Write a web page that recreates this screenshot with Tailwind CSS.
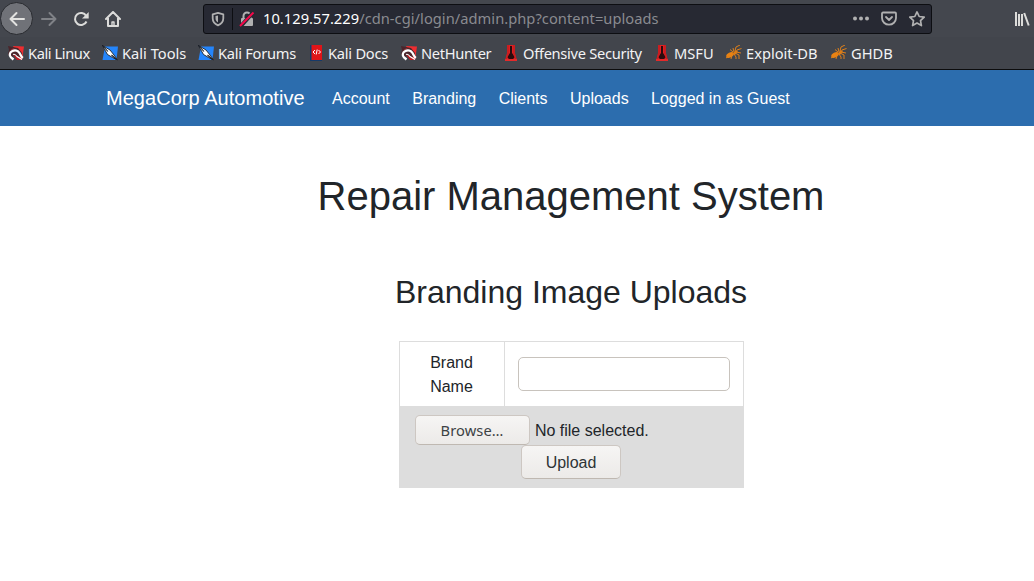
<!DOCTYPE html>
<html lang="en">
<head>
    <meta charset="UTF-8">
    <meta name="viewport" content="width=device-width, initial-scale=1.0">
    <title>Repair Management System</title>
    <script src="https://cdn.jsdelivr.net/npm/@tailwindcss/browser@4"></script>
</head>
<body class="bg-white text-[#212529] font-['Liberation_Sans',sans-serif] overflow-hidden h-[581px]">
    <!-- Shared bookmark icons -->
    <svg class="hidden">
        <symbol id="hunter" viewBox="0 0 16 16">
            <path d="M5 1l11 .5-2 13.500-5-5z" fill="#ee2d30"/>
            <path d="M0 1l5 1 5 1 4 5v3l-3 1-5-2-3 3L0 9l1-4z" fill="#4b252b"/>
            <path d="M0 8l4-4 3-1-5 3z" fill="#c93a40"/>
            <path d="M5.500 14.500L3 12.500C1 10.500 1.500 7.500 4 6.200c3-1.700 6-.7 7.500 1.800 1 1.600 1.500 3.500 3.300 5" fill="none" stroke="#fff" stroke-width="2.300"/>
            <path d="M5 9.500l3 1 6 4.500H9z" fill="#bd1920"/>
            <path d="M5 9.500c2-1 3 .5 4 2l5 3" fill="none" stroke="#fff" stroke-width="1.200"/>
        </symbol>
        <symbol id="tools" viewBox="0 0 16 16">
            <path d="M3 1.500h13L14.500 15H.5z" fill="#2485fb"/>
            <path d="M0 0l3 2 5 3 4 5 3.500 5-5-2.500-5-3L3.500 6z" fill="#fff" stroke="#1b2028" stroke-width=".9"/>
            <path d="M0 0l6 6.500M9.500 10l5 4.500" stroke="#1b2028" stroke-width="1.100"/>
        </symbol>
        <symbol id="docs" viewBox="0 0 16 16">
            <path d="M2 0h12v16H2z" fill="#e01418"/>
            <path d="M2 0h1.500v15H14v1H2z" fill="#163a69"/>
            <path d="M7 5L5 7l2 2M10.500 5l2 2-2 2M9.200 4.500L8.200 9.500" fill="none" stroke="#fff"/>
        </symbol>
        <symbol id="offsec" viewBox="0 0 16 16">
            <path d="M4 0h8v9l2 7H2l2-7z" fill="#df2021"/>
            <path d="M7 1h2v7l3 4-3 3H7l-3-3 3-4z" fill="#2a0c0e"/>
            <path d="M4 0v8l-2 8h1l3-7V0zM10 0h2v8l2 8h-1l-3-7z" fill="#c91d20"/>
            <path d="M2 14h12v2H2z" fill="#e32a2a"/>
        </symbol>
        <symbol id="ant" viewBox="0 0 16 16">
            <ellipse cx="4" cy="10" rx="4" ry="2.400" transform="rotate(-25 4 10)" fill="#e98212"/>
            <path d="M6 9l4-4 2 1-3 4z" fill="#e07c12"/>
            <path d="M7 7L4 4.500M8 7L7 3M9 6l1-4 4-2M11 5l4.500-1.500M10 7l5 1M9 8l4 2v4M8 9l2 3v2M6 10l-1 4M3 11l-3 2" fill="none" stroke="#df801a" stroke-width="1"/>
        </symbol>
    </svg>

    <!-- Browser toolbar -->
    <header class="h-[70px] bg-[#42454c] border-b border-[#0c0c0d] font-['Noto_Sans',sans-serif] text-[#f3f3f4]">
        <div class="h-[37px] flex items-center bg-[#44474e]">
            <div class="size-[33px] shrink-0 rounded-full bg-[#707278] border border-[#292b30] flex items-center justify-center">
                <svg class="size-4" viewBox="0 0 16 16" fill="none" stroke="#e2e2e0" stroke-width="2" stroke-linecap="round" stroke-linejoin="round"><path d="M15 8H1.500M7.500 2l-6 6 6 6"/></svg>
            </div>
            <svg class="size-4 ml-2 shrink-0" viewBox="0 0 16 16" fill="none" stroke="#808287" stroke-width="2" stroke-linecap="round" stroke-linejoin="round"><path d="M1 8h13.500M8.500 2l6 6-6 6"/></svg>
            <svg class="size-4 ml-4 shrink-0" viewBox="0 0 16 16" fill="none" stroke="#dcdcda" stroke-width="2"><path d="M13.200 5A6 6 0 1 0 13.500 10.500"/><path d="M15.700 1v6.500H9z" fill="#dcdcda" stroke="none"/></svg>
            <svg class="size-4 ml-4 shrink-0" viewBox="0 0 16 16" fill="none" stroke="#dcdcda" stroke-width="2" stroke-linecap="round" stroke-linejoin="round"><path d="M1 8l7-7 7 7M3 7v8h10V7"/><path d="M7 15v-4h2v4" stroke-width="1.400"/></svg>
            <div class="ml-[82px] w-[729px] h-[30px] shrink-0 flex items-center bg-[#272933] border border-[#0d0e12] rounded-[3px]">
                <svg class="size-4 ml-[6px] shrink-0" viewBox="0 0 16 16" fill="none" stroke="#b0b0b1" stroke-width="1.800" stroke-linejoin="round"><path d="M8 1.800l5.300 1.500v4c0 3.500-2 5.700-5.300 7-3.300-1.300-5.300-3.500-5.300-7v-4z"/><path d="M8 4.500v7C6 10.300 5.500 9 5.500 7V5z" fill="#b0b0b1" stroke="none"/></svg>
                <div class="ml-[6px] w-px h-[22px] bg-[#0d0e12] shrink-0"></div>
                <svg class="size-4 ml-[6px] shrink-0" viewBox="0 0 16 16"><path d="M3 7h10a1 1 0 0 1 1 1v6a1 1 0 0 1-1 1H3a1 1 0 0 1-1-1V8a1 1 0 0 1 1-1z" fill="#b0b0b1"/><path d="M4.500 8V5a3.500 3.500 0 0 1 7 0v3" fill="none" stroke="#b0b0b1" stroke-width="2"/><path d="M1.500 15.500L14 1.500" stroke="#272933" stroke-width="4"/><path d="M1 15L14.500 1.500" stroke="#f5084a" stroke-width="1.900"/></svg>
                <div class="ml-2 w-[584px] shrink-0 text-[14.67px] leading-5 tracking-[0.04px] whitespace-nowrap text-[#8a8b90] -mt-0.5"><span class="text-white">10.129.57.229</span>/cdn-cgi/login/admin.php?content=uploads</div>
                <svg class="size-4 shrink-0 ml-[6px]" viewBox="0 0 16 16" fill="#b0b0b1"><circle cx="2" cy="7.500" r="2"/><circle cx="8" cy="7.500" r="2"/><circle cx="14" cy="7.500" r="2"/></svg>
                <svg class="size-4 shrink-0 ml-3" viewBox="0 0 16 16" fill="none" stroke="#b0b0b1" stroke-width="1.800" stroke-linecap="round" stroke-linejoin="round"><path d="M2 1.500h12a1 1 0 0 1 1 1v4.500a7 6.700 0 0 1-14 0V2.500a1 1 0 0 1 1-1z"/><path d="M5 6l3 3 3-3"/></svg>
                <svg class="size-4 shrink-0 ml-3" viewBox="0 0 16 16" fill="none" stroke="#b0b0b1" stroke-width="1.700" stroke-linejoin="round"><path d="M8 .9l2.200 4.600 5 .6-3.700 3.500.9 5L8 12.100l-4.400 2.500.9-5L.8 6.100l5-.6z"/></svg>
            </div>
            <svg class="w-4 h-4 ml-[82px] shrink-0" viewBox="0 0 16 16" stroke="#dcdcda" stroke-width="2"><path d="M2 1v14M5 3v12M8 3v12M10.200 2l4.500 12.500"/></svg>
        </div>
        <nav class="h-8 flex items-center text-[14.67px] leading-5 whitespace-nowrap">
            <a class="flex items-center gap-1 ml-2 w-[94px] shrink-0 tracking-[-0.42px]"><svg class="size-4 shrink-0"><use href="#hunter"/></svg><span>Kali Linux</span></a>
            <a class="flex items-center gap-1 w-[96px] shrink-0"><svg class="size-4 shrink-0"><use href="#tools"/></svg><span>Kali Tools</span></a>
            <a class="flex items-center gap-1 w-[110px] shrink-0 tracking-[-0.28px]"><svg class="size-4 shrink-0"><use href="#tools"/></svg><span>Kali Forums</span></a>
            <a class="flex items-center gap-1 w-[93px] shrink-0 tracking-[-0.25px]"><svg class="size-4 shrink-0"><use href="#docs"/></svg><span>Kali Docs</span></a>
            <a class="flex items-center gap-1 w-[102px] shrink-0 tracking-[-0.33px]"><svg class="size-4 shrink-0"><use href="#hunter"/></svg><span>NetHunter</span></a>
            <a class="flex items-center gap-1 w-[151px] shrink-0 tracking-[-0.3px]"><svg class="size-4 shrink-0"><use href="#offsec"/></svg><span>Offensive Security</span></a>
            <a class="flex items-center gap-1 w-[72px] shrink-0"><svg class="size-4 shrink-0"><use href="#offsec"/></svg><span>MSFU</span></a>
            <a class="flex items-center gap-1 w-[105px] shrink-0"><svg class="size-4 shrink-0"><use href="#ant"/></svg><span>Exploit-DB</span></a>
            <a class="flex items-center gap-1 shrink-0"><svg class="size-4 shrink-0"><use href="#ant"/></svg><span>GHDB</span></a>
        </nav>
    </header>

    <!-- Site navigation -->
    <nav class="h-14 bg-[#2c6dae] text-white flex items-center pl-[106px] whitespace-nowrap">
        <a class="text-xl w-[226px] tracking-[0.04px]">MegaCorp Automotive</a>
        <div class="flex gap-[22.4px] pt-0.5">
            <a>Account</a>
            <a>Branding</a>
            <a>Clients</a>
            <a>Uploads</a>
            <a>Logged in as Guest</a>
        </div>
    </nav>

    <main class="w-[930px] ml-[106px] flex flex-col items-center">
        <h1 class="mt-[46px] text-[40px] leading-12 whitespace-nowrap">Repair Management System</h1>
        <h2 class="mt-[53px] text-[32px] leading-[38px] whitespace-nowrap">Branding Image Uploads</h2>

        <form class="mt-[30px] w-[345px] h-[147px] border border-[#dddddd] text-center">
            <div class="flex h-16">
                <div class="w-[105px] pt-0.5 border-r border-[#dddddd] flex items-center justify-center leading-6">Brand<br>Name</div>
                <div class="flex-1 flex items-center justify-center">
                    <input type="text" class="w-[212px] h-[34px] border border-[#c8c3bd] rounded-[5px] bg-white">
                </div>
            </div>
            <div class="h-[81px] bg-[#dddddd] pt-[9px] flex flex-col items-center">
                <div class="w-full pl-[15px] flex items-center gap-[5.4px]">
                    <button type="button" class="w-[115px] h-[30px] border border-[#cdc7c2] border-b-[#bfb8b1] rounded-[5px] bg-linear-to-b from-[#f6f5f4] to-[#eceae8] font-['Noto_Sans',sans-serif] text-[14.67px] tracking-[0.1px] text-[#3c4244]">Browse…</button>
                    <span class="pt-0.5">No file selected.</span>
                </div>
                <button type="button" class="w-[100px] h-[34px] pt-0.5 border border-[#cdc7c2] border-b-[#bfb8b1] rounded-[5px] bg-linear-to-b from-[#f6f5f4] to-[#eceae8] text-[#2e3436]">Upload</button>
            </div>
        </form>
    </main>
</body>
</html>
